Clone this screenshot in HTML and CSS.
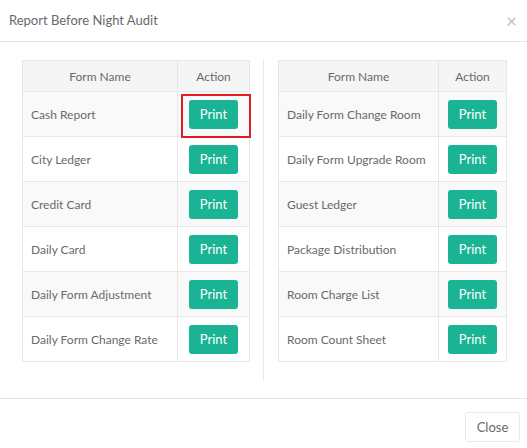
FILE: index.html
```html
<!DOCTYPE html>
<html>
<head>
<meta charset="utf-8">
<link rel="stylesheet" href="styles.css">
</head>
<body>
<div class="modal">
  <div class="modal-header">
    <h4 class="modal-title">Report Before Night Audit</h4>
    <span class="close-x">×</span>
  </div>
  <div class="modal-body">
    <div class="col">
      <table class="tbl tbl-left">
        <colgroup><col class="c-name-l"><col class="c-act-l"></colgroup>
        <thead><tr><th>Form Name</th><th>Action</th></tr></thead>
        <tbody>
          <tr><td>Cash Report</td><td class="act"><button class="btn-print selected">Print</button></td></tr>
          <tr><td>City Ledger</td><td class="act"><button class="btn-print">Print</button></td></tr>
          <tr><td>Credit Card</td><td class="act"><button class="btn-print">Print</button></td></tr>
          <tr><td>Daily Card</td><td class="act"><button class="btn-print">Print</button></td></tr>
          <tr><td>Daily Form Adjustment</td><td class="act"><button class="btn-print">Print</button></td></tr>
          <tr><td>Daily Form Change Rate</td><td class="act"><button class="btn-print">Print</button></td></tr>
        </tbody>
      </table>
    </div>
    <div class="divider"></div>
    <div class="col">
      <table class="tbl tbl-right">
        <colgroup><col class="c-name-r"><col class="c-act-r"></colgroup>
        <thead><tr><th>Form Name</th><th>Action</th></tr></thead>
        <tbody>
          <tr><td>Daily Form Change Room</td><td class="act"><button class="btn-print">Print</button></td></tr>
          <tr><td>Daily Form Upgrade Room</td><td class="act"><button class="btn-print">Print</button></td></tr>
          <tr><td>Guest Ledger</td><td class="act"><button class="btn-print">Print</button></td></tr>
          <tr><td>Package Distribution</td><td class="act"><button class="btn-print">Print</button></td></tr>
          <tr><td>Room Charge List</td><td class="act"><button class="btn-print">Print</button></td></tr>
          <tr><td>Room Count Sheet</td><td class="act"><button class="btn-print">Print</button></td></tr>
        </tbody>
      </table>
    </div>
  </div>
  <div class="modal-footer">
    <button class="btn-close">Close</button>
  </div>
</div>
</body>
</html>
```
FILE: styles.css
```css
* { box-sizing: border-box; }
html, body { margin: 0; padding: 0; background: #fff; }
body {
  font-family: Lato, "Open Sans", "Liberation Sans", sans-serif;
  font-size: 12px;
  color: #676a6c;
}
.modal { width: 527px; height: 448px; display: flex; flex-direction: column; }
.modal-header {
  height: 42px;
  border-bottom: 1px solid #e5e5e5;
  display: flex;
  align-items: center;
  justify-content: space-between;
  padding: 0 9px 1px 9px;
}
.modal-title { margin: 0; font-size: 13px; font-weight: 400; color: #676a6c; }
.close-x { font-size: 19px; color: #c4c4c4; line-height: 1; margin-right: 1px; }
.modal-body {
  display: grid;
  grid-template-columns: 227px 1px 228px;
  column-gap: 14px;
  padding: 18px 0 18px 22px;
  height: 356px;
}
.col { min-width: 0; }
.divider { background: #e7e7e7; }
.tbl {
  border-collapse: collapse;
  table-layout: fixed;
  width: 100%;
}
.c-name-l { width: 155px; }
.c-act-l { width: 72px; }
.c-name-r { width: 160px; }
.c-act-r { width: 68px; }
.tbl th, .tbl td {
  border: 1px solid #e7e7e7;
  padding: 0 8px;
  white-space: nowrap;
}
.tbl th {
  height: 31px;
  font-weight: 400;
  text-align: center;
  background: #f5f5f5;
}
.tbl td { height: 45px; }
.tbl tbody tr:nth-child(odd) td { background: #f9f9f9; }
.tbl td.act { text-align: center; padding: 0; }
.btn-print {
  position: relative;
  width: 49px;
  height: 29px;
  border: 0;
  border-radius: 3px;
  background: #1ab394;
  color: #fff;
  font-family: inherit;
  font-size: 13px;
  padding: 0 0 1px;
  vertical-align: middle;
}
.btn-print.selected::after {
  content: "";
  position: absolute;
  left: -8px;
  top: -6px;
  width: 66px;
  height: 40px;
  border: 2px solid #e31b23;
}
.modal-footer {
  border-top: 1px solid #e5e5e5;
  display: flex;
  justify-content: flex-end;
  padding: 13px 7px 0 0;
  flex: 1;
}
.btn-close {
  width: 55px;
  height: 30px;
  background: #fff;
  border: 1px solid #e7eaec;
  border-radius: 3px;
  color: #676a6c;
  font-family: inherit;
  font-size: 13px;
  padding: 0;
}
```
